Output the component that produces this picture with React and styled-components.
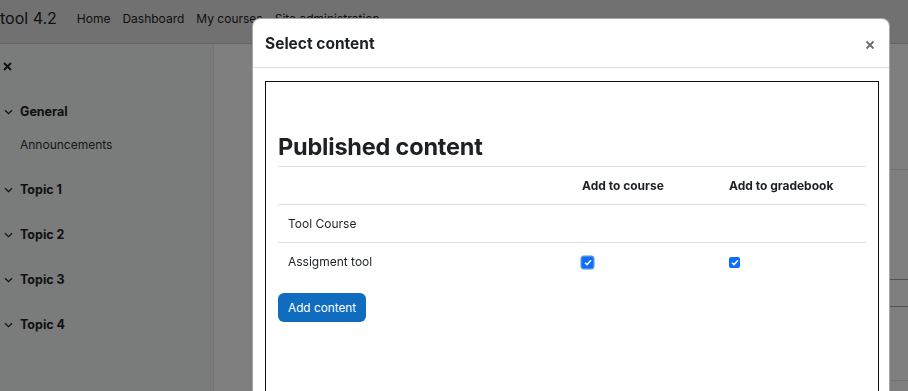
import React from 'react'
import styled, { createGlobalStyle, css } from 'styled-components'

const GlobalStyle = createGlobalStyle`
  html, body {
    margin: 0;
    padding: 0;
    height: 100%;
    overflow: hidden;
    background: #fff;
    font-family: Inter, "Noto Sans", "Liberation Sans", sans-serif;
    color: #1d2125;
  }
  * { box-sizing: border-box; }
`

const Page = styled.div`
  display: flex;
  flex-direction: column;
  height: 100vh;
`

const Navbar = styled.nav`
  display: flex;
  align-items: center;
  height: 44px;
  flex-shrink: 0;
  background: #e3e3e3;
  border-bottom: 1px solid #c8c8c8;
  padding-bottom: 7px;
  .brand {
    font-size: 16px;
    margin-left: 0;
    margin-right: 20px;
    color: #1d2125;
  }
  .links {
    display: flex;
    gap: 12px;
    font-size: 12px;
  }
`

const Layout = styled.div`
  display: flex;
  flex: 1;
  min-height: 0;
`

const Drawer = styled.aside`
  width: 214px;
  flex-shrink: 0;
  background: #f5f6f7;
  border-right: 1px solid #e4e4e4;
  .close {
    height: 44px;
    display: flex;
    align-items: center;
    padding-left: 3px;
  }
  .sections {
    padding-top: 7px;
  }
`

const Section = styled.div`
  margin-bottom: 12px;
`

const SectionTitle = styled.div`
  display: flex;
  align-items: center;
  height: 33px;
  font-size: 12.5px;
  font-weight: 700;
  svg {
    margin-left: 4px;
    margin-right: 7px;
  }
`

const SectionItem = styled.div`
  display: flex;
  align-items: center;
  height: 33px;
  padding-left: 20px;
  font-size: 12px;
  color: #2f3338;
`

const Main = styled.main`
  flex: 1;
  background: #fff;
  padding-left: 60px;
`

const CourseBlock = styled.div`
  height: ${p => p.$h}px;
  border-bottom: 1px solid ${p => (p.$dark ? '#a5a5a5' : '#e2e2e2')};
`

const Backdrop = styled.div`
  position: fixed;
  inset: 0;
  background: rgba(0, 0, 0, 0.5);
`

const Modal = styled.div`
  position: fixed;
  left: 252px;
  top: 18px;
  width: 638px;
  height: 420px;
  background: #fff;
  border: 1px solid rgba(0, 0, 0, 0.35);
  border-radius: 8px;
  display: flex;
  flex-direction: column;
`

const ModalHeader = styled.div`
  display: flex;
  align-items: center;
  justify-content: space-between;
  height: 49px;
  padding: 0 14px 0 12px;
  border-bottom: 1px solid #dee2e6;
  h5 {
    margin: 0;
    font-size: 15.5px;
    font-weight: 700;
    color: #1d2125;
  }
  button {
    border: 0;
    background: none;
    padding: 0;
    display: flex;
    margin-top: 4px;
  }
`

const ModalBody = styled.div`
  padding: 13px 10px 0 12px;
`

const Frame = styled.div`
  border: 1px solid #111;
  height: 340px;
  padding: 50px 12px 0 12px;
  h3 {
    margin: 0 0 5px;
    font-size: 23.5px;
    font-weight: 700;
    line-height: 29px;
    letter-spacing: -0.2px;
  }
`

const Table = styled.table`
  width: 100%;
  table-layout: fixed;
  border-collapse: collapse;
  font-size: 12px;
  th, td {
    border-top: 1px solid #dee2e6;
    padding: 9px 10px;
    line-height: 19px;
    text-align: left;
    vertical-align: middle;
  }
  th {
    font-weight: 700;
  }
  col.name {
    width: 294px;
  }
`

const Check = styled.span`
  display: inline-flex;
  align-items: center;
  justify-content: center;
  width: 11px;
  height: 11px;
  border-radius: 2px;
  background: #0d6efd;
  vertical-align: middle;
  ${p => p.$focus && css`
    box-shadow: 0 0 0 1.5px #4c8fd6;
  `}
`

const Button = styled.button`
  margin-top: 13px;
  height: 29px;
  padding: 0 10px;
  border: 0;
  border-radius: 6px;
  background: #0f6cbf;
  color: #fff;
  font-family: inherit;
  font-size: 11.8px;
`

const Chevron = () => (
  <svg width="9" height="6" viewBox="0 0 9 6" fill="none">
    <path d="M1 1.2 L4.5 4.6 L8 1.2" stroke="#1d2125" strokeWidth="1.2" />
  </svg>
)

const Tick = () => (
  <svg width="8" height="7" viewBox="0 0 8 7" fill="none">
    <path d="M1 3.8 L3 5.6 L7 1.2" stroke="#fff" strokeWidth="1.5" />
  </svg>
)

const sections = [
  { title: 'General', items: ['Announcements'] },
  { title: 'Topic 1', items: [] },
  { title: 'Topic 2', items: [] },
  { title: 'Topic 3', items: [] },
  { title: 'Topic 4', items: [] },
]

const App = () => {
  return (
    <>
      <GlobalStyle />
      <Page>
        <Navbar>
          <span className="brand">tool 4.2</span>
          <div className="links">
            <span>Home</span>
            <span>Dashboard</span>
            <span>My courses</span>
            <span>Site administration</span>
          </div>
        </Navbar>
        <Layout>
          <Drawer>
            <div className="close">
              <svg width="9" height="9" viewBox="0 0 9 9">
                <path d="M1 1 L8 8 M8 1 L1 8" stroke="#1d2125" strokeWidth="1.8" />
              </svg>
            </div>
            <div className="sections">
              {sections.map(s => (
                <Section key={s.title}>
                  <SectionTitle>
                    <Chevron />
                    {s.title}
                  </SectionTitle>
                  {s.items.map(i => (
                    <SectionItem key={i}>{i}</SectionItem>
                  ))}
                </Section>
              ))}
            </div>
          </Drawer>
          <Main>
            <CourseBlock $h={126} />
            <CourseBlock $h={110} $dark />
            <CourseBlock $h={27} $dark />
            <CourseBlock $h={74} />
          </Main>
        </Layout>
      </Page>
      <Backdrop />
      <Modal>
        <ModalHeader>
          <h5>Select content</h5>
          <button aria-label="Close">
            <svg width="10" height="10" viewBox="0 0 10 10">
              <path d="M1.5 1.5 L8.5 8.5 M8.5 1.5 L1.5 8.5" stroke="#6c6c6c" strokeWidth="1.8" />
            </svg>
          </button>
        </ModalHeader>
        <ModalBody>
          <Frame>
            <h3>Published content</h3>
            <Table>
              <colgroup>
                <col className="name" />
                <col />
                <col />
              </colgroup>
              <thead>
                <tr>
                  <th></th>
                  <th>Add to course</th>
                  <th>Add to gradebook</th>
                </tr>
              </thead>
              <tbody>
                <tr>
                  <td>Tool Course</td>
                  <td></td>
                  <td></td>
                </tr>
                <tr>
                  <td>Assigment tool</td>
                  <td><Check $focus><Tick /></Check></td>
                  <td><Check><Tick /></Check></td>
                </tr>
              </tbody>
            </Table>
            <Button>Add content</Button>
          </Frame>
        </ModalBody>
      </Modal>
    </>
  )
}

export default App
